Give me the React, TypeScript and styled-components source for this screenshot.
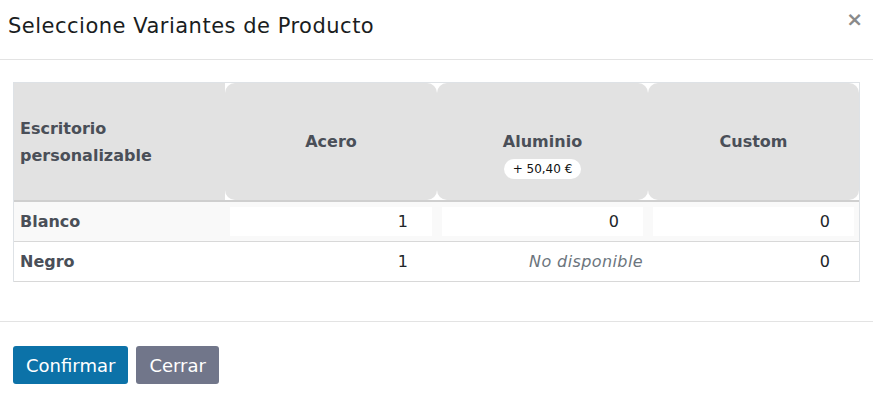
import React from "react";
import styled, { createGlobalStyle } from "styled-components";

const GlobalStyle = createGlobalStyle`
  html, body {
    margin: 0;
    padding: 0;
    background: #ffffff;
  }
  body {
    font-family: "DejaVu Sans", "Noto Sans", sans-serif;
    color: #212529;
  }
`;

type Cell = { value?: string; missing?: boolean };

const columns = [
  { name: "Acero" },
  { name: "Aluminio", extra: "+ 50,40 €" },
  { name: "Custom" },
];

const rows: { name: string; editable: boolean; cells: Cell[] }[] = [
  { name: "Blanco", editable: true, cells: [{ value: "1" }, { value: "0" }, { value: "0" }] },
  { name: "Negro", editable: false, cells: [{ value: "1" }, { missing: true }, { value: "0" }] },
];

const App = () => {
  return (
    <Modal>
      <GlobalStyle />
      <Header>
        <Title>Seleccione Variantes de Producto</Title>
        <Close aria-label="close">×</Close>
      </Header>
      <Body>
        <Table>
          <HeadRow>
            <CornerCell>Escritorio personalizable</CornerCell>
            {columns.map((c) => (
              <HeadCell key={c.name}>
                <span>{c.name}</span>
                {c.extra && <PriceBadge>{c.extra}</PriceBadge>}
              </HeadCell>
            ))}
          </HeadRow>
          {rows.map((r) => (
            <Row key={r.name} $striped={r.editable}>
              <RowLabel>{r.name}</RowLabel>
              {r.cells.map((cell, i) => (
                <ValueCell key={i}>
                  {cell.missing ? (
                    <Missing>No disponible</Missing>
                  ) : (
                    <Qty $boxed={r.editable}>{cell.value}</Qty>
                  )}
                </ValueCell>
              ))}
            </Row>
          ))}
        </Table>
      </Body>
      <Footer>
        <Button $variant="primary">Confirmar</Button>
        <Button $variant="secondary">Cerrar</Button>
      </Footer>
    </Modal>
  );
};

export default App;

const Modal = styled.div`
  width: 873px;
  height: 401px;
  background: #fff;
  display: flex;
  flex-direction: column;
`;

const Header = styled.div`
  flex-shrink: 0;
  height: 59px;
  padding: 0 10px 0 8px;
  display: flex;
  align-items: center;
  justify-content: space-between;
  border-bottom: 1px solid #e3e3e3;
`;

const Title = styled.h4`
  margin: 0;
  padding-bottom: 7px;
  font-size: 21px;
  font-weight: 400;
  letter-spacing: 0.5px;
  color: #1a1d21;
`;

const Close = styled.button`
  border: none;
  background: none;
  padding: 0;
  margin-top: -22px;
  font-family: "DejaVu Sans", sans-serif;
  font-size: 20px;
  font-weight: 700;
  line-height: 1;
  color: #8a8a8a;
  cursor: pointer;
`;

const Body = styled.div`
  flex-shrink: 0;
  padding: 22px 13px 39px;
  border-bottom: 1px solid #e3e3e3;
`;

const Table = styled.div`
  border: 1px solid #dee2e6;
  border-bottom: none;
`;

const HeadRow = styled.div`
  display: grid;
  grid-template-columns: 211px 212px 211px 1fr;
  height: 117px;
  border-bottom: 2px solid #cfcfcf;
`;

const CornerCell = styled.div`
  background: #e2e2e2;
  display: flex;
  align-items: center;
  padding: 0 6px;
  font-size: 16px;
  font-weight: 700;
  line-height: 27px;
  color: #4a4f58;
`;

const HeadCell = styled.div`
  background: #e2e2e2;
  border-radius: 10px;
  display: flex;
  flex-direction: column;
  align-items: center;
  justify-content: flex-start;
  gap: 8px;
  padding-top: 49px;
  font-size: 16px;
  font-weight: 700;
  line-height: 19px;
  color: #4a4f58;
`;

const PriceBadge = styled.span`
  background: #fff;
  border-radius: 10px;
  padding: 2px 9px;
  font-size: 12px;
  font-weight: 400;
  line-height: 16px;
  color: #111;
`;

const Row = styled.div<{ $striped: boolean }>`
  display: grid;
  grid-template-columns: 211px 212px 211px 1fr;
  height: 39px;
  border-bottom: 1px solid #d8d8d8;
  background: ${(p) => (p.$striped ? "#f9f9f9" : "#fff")};
`;

const RowLabel = styled.div`
  display: flex;
  align-items: center;
  padding: 0 6px;
  font-size: 16px;
  font-weight: 700;
  color: #4a4f58;
`;

const ValueCell = styled.div`
  display: flex;
  align-items: stretch;
  justify-content: flex-end;
  padding: 5px;
`;

const Qty = styled.div<{ $boxed: boolean }>`
  flex: 1;
  display: flex;
  align-items: center;
  justify-content: flex-end;
  padding-right: 24px;
  background: ${(p) => (p.$boxed ? "#fff" : "transparent")};
  font-size: 16px;
  color: #212529;
`;

const Missing = styled.div`
  display: flex;
  align-items: center;
  font-size: 16px;
  font-style: italic;
  letter-spacing: 0.4px;
  color: #6c757d;
`;

const Footer = styled.div`
  padding: 24px 13px;
  display: flex;
  gap: 8px;
`;

const Button = styled.button<{ $variant: "primary" | "secondary" }>`
  height: 38px;
  padding: 0 13px;
  border: none;
  border-radius: 3px;
  font-family: "DejaVu Sans", sans-serif;
  font-size: 18px;
  color: #fff;
  background: ${(p) => (p.$variant === "primary" ? "#0c72a8" : "#71768a")};
  cursor: pointer;
`;
